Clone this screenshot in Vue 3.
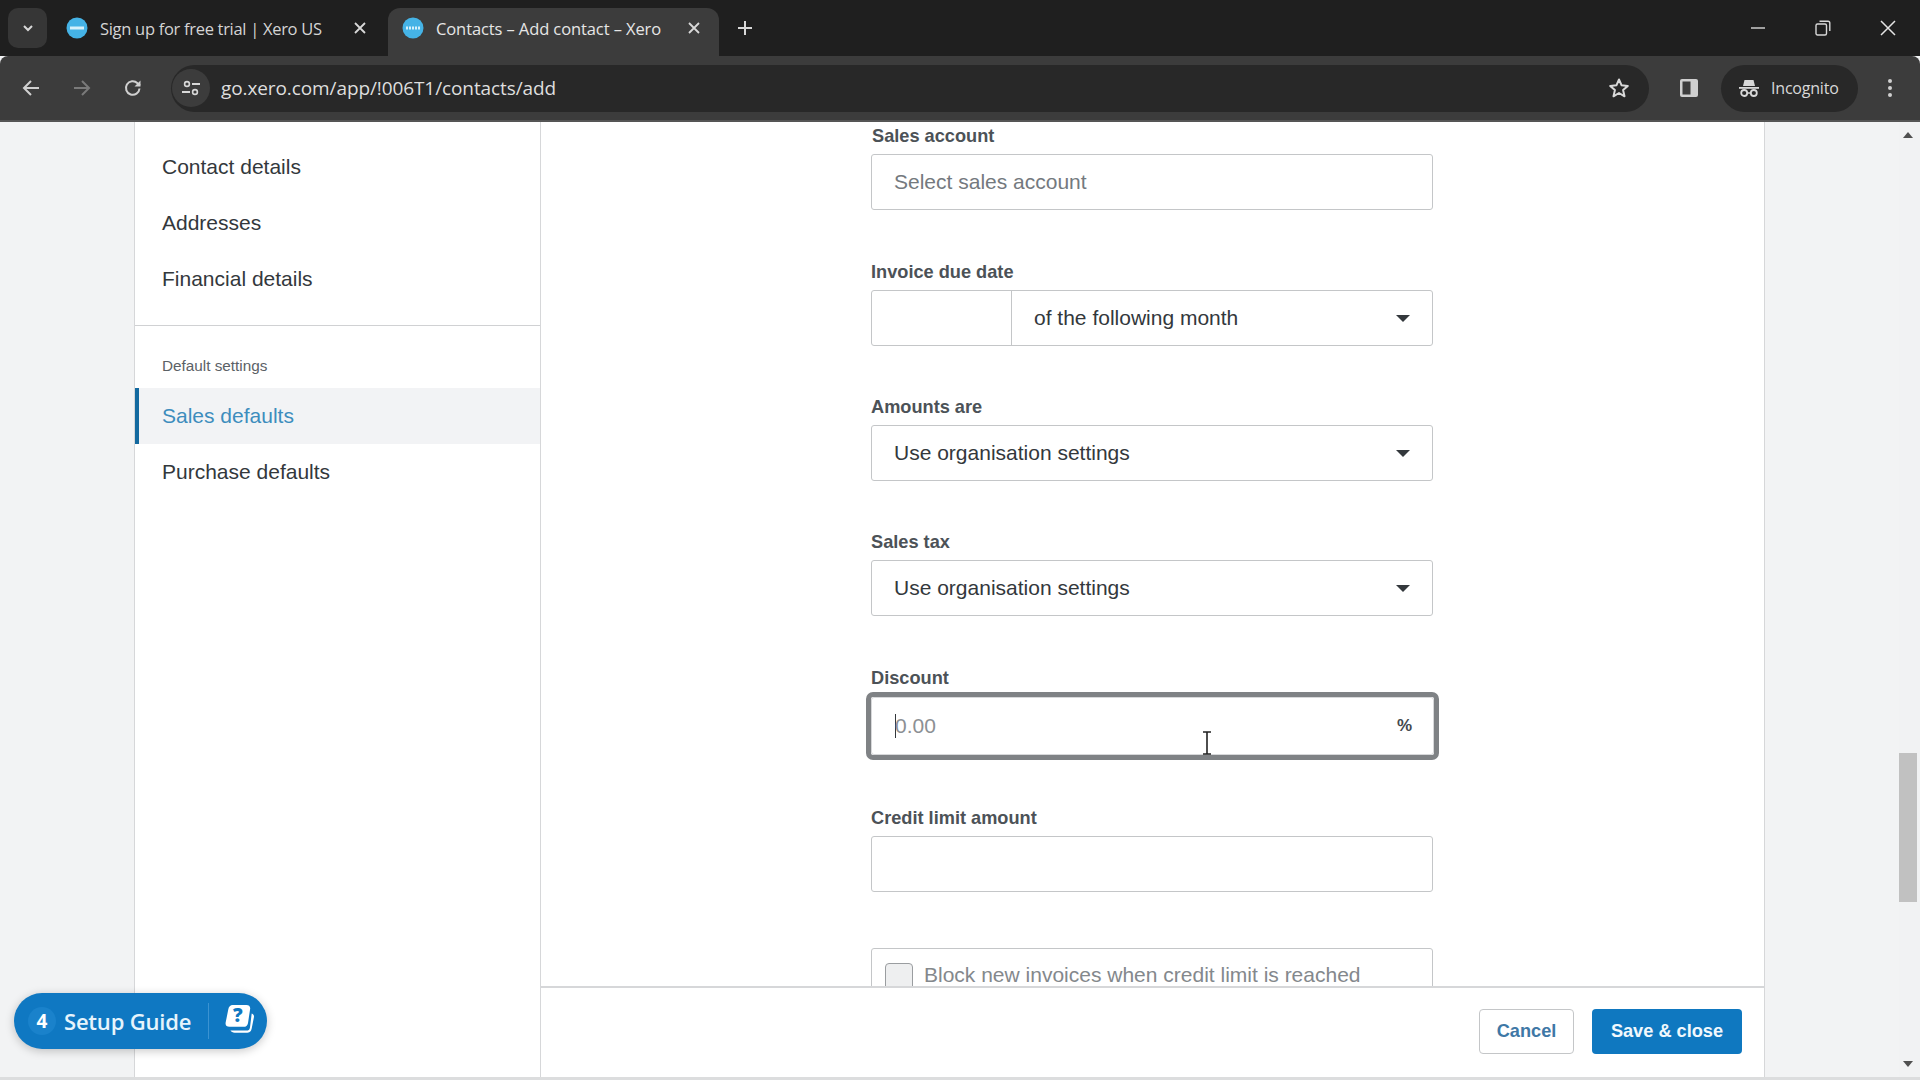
<template>
  <div class="screen">
    <header class="tabstrip">
      <div class="tab-menu">
        <svg width="14" height="14" viewBox="0 0 14 14"><path d="M3 5l4 4 4-4" fill="none" stroke="#d8d8d8" stroke-width="2" /></svg>
      </div>
      <div v-for="tab in tabs" :key="tab.title" :class="['tab', { active: tab.active }]">
        <svg class="favicon" width="22" height="22" viewBox="0 0 22 22">
          <circle cx="11" cy="11" r="10.5" fill="#45b3e6" />
          <path d="M4 11h14" stroke="#d6f1fb" stroke-width="3" :stroke-dasharray="tab.active ? '2 1' : '0'" />
        </svg>
        <span class="tab-title">{{ tab.title }}</span>
        <svg class="tab-close" width="14" height="14" viewBox="0 0 14 14"><path d="M2 2l10 10M12 2L2 12" stroke="#d8d8d8" stroke-width="1.8" /></svg>
      </div>
      <svg class="new-tab" width="16" height="16" viewBox="0 0 16 16"><path d="M8 1v14M1 8h14" stroke="#d8d8d8" stroke-width="2" /></svg>
      <div class="window-btns">
        <svg width="16" height="16" viewBox="0 0 16 16"><path d="M1 8h14" stroke="#d8d8d8" stroke-width="1.4" /></svg>
        <svg width="16" height="16" viewBox="0 0 16 16"><rect x="1" y="4" width="10.5" height="11" rx="1.5" fill="none" stroke="#d8d8d8" stroke-width="1.4" /><path d="M4.5 1.2h8.5a1.8 1.8 0 0 1 1.8 1.8v8" fill="none" stroke="#d8d8d8" stroke-width="1.4" /></svg>
        <svg width="16" height="16" viewBox="0 0 16 16"><path d="M1 1l14 14M15 1L1 15" stroke="#e4e4e4" stroke-width="1.5" /></svg>
      </div>
    </header>

    <div class="toolbar">
      <div class="nav-btns">
        <svg width="20" height="20" viewBox="0 0 20 20"><path d="M18 10H3M10 3l-7 7 7 7" fill="none" stroke="#d0d0d0" stroke-width="2" /></svg>
        <svg width="20" height="20" viewBox="0 0 20 20"><path d="M2 10h15M10 3l7 7-7 7" fill="none" stroke="#7a7a7a" stroke-width="2" /></svg>
        <svg width="20" height="20" viewBox="0 0 20 20"><path d="M16.500 10.500a6.800 6.800 0 1 1-2-5.300L17 7.500" fill="none" stroke="#d0d0d0" stroke-width="2" /><path d="M17.500 2.500v6h-6z" fill="#d0d0d0" /></svg>
      </div>
      <div class="address-bar">
        <div class="site-info">
          <svg width="20" height="20" viewBox="0 0 20 20">
            <circle cx="6" cy="6" r="2.400" fill="none" stroke="#d8d8d8" stroke-width="1.600" />
            <path d="M11 6h8M1 14h8" stroke="#d8d8d8" stroke-width="1.800" />
            <circle cx="14" cy="14" r="2.400" fill="none" stroke="#d8d8d8" stroke-width="1.600" />
          </svg>
        </div>
        <span class="url">go.xero.com/app/!006T1/contacts/add</span>
        <svg class="star" width="22" height="22" viewBox="0 0 22 22"><path d="M11 2.500l2.600 5.800 6.200.6-4.700 4.200 1.400 6.200L11 16l-5.500 3.300 1.400-6.200-4.700-4.200 6.200-.6z" fill="none" stroke="#d8d8d8" stroke-width="2" stroke-linejoin="round" /></svg>
      </div>
      <svg class="side-panel" width="20" height="20" viewBox="0 0 20 20"><rect x="1" y="1" width="18" height="18" rx="2" fill="#cfcfcf" /><rect x="3.500" y="3.500" width="8" height="13" fill="#3c3c3c" /></svg>
      <div class="incognito">
        <svg width="20" height="20" viewBox="0 0 20 20">
          <path d="M4 8l1.500-6h9L16 8z" fill="#d8d8d8" />
          <path d="M0 9h20v1.800H0z" fill="#d8d8d8" />
          <circle cx="5.200" cy="15" r="3" fill="none" stroke="#d8d8d8" stroke-width="1.800" />
          <circle cx="14.800" cy="15" r="3" fill="none" stroke="#d8d8d8" stroke-width="1.800" />
          <path d="M8 15h4" stroke="#d8d8d8" stroke-width="1.500" />
        </svg>
        <span>Incognito</span>
      </div>
      <svg class="kebab" width="6" height="20" viewBox="0 0 6 20"><circle cx="3" cy="3" r="2" fill="#d0d0d0" /><circle cx="3" cy="10" r="2" fill="#d0d0d0" /><circle cx="3" cy="17" r="2" fill="#d0d0d0" /></svg>
    </div>

    <div class="page">
      <div class="gutter-left"></div>
      <div class="card">
        <aside class="sidebar">
          <nav class="nav-top">
            <a v-for="item in topNav" :key="item" class="nav-item">{{ item }}</a>
          </nav>
          <div class="nav-heading">Default settings</div>
          <a class="nav-item selected">Sales defaults</a>
          <a class="nav-item">Purchase defaults</a>
        </aside>

        <main class="main">
          <div class="form">
            <label class="field-label first">Sales account</label>
            <div class="input placeholder">Select sales account</div>

            <label class="field-label invoice-label">Invoice due date</label>
            <div class="input split">
              <div class="split-day"></div>
              <div class="split-select">
                <span>of the following month</span>
                <i class="caret"></i>
              </div>
            </div>

            <template v-for="sel in selects" :key="sel">
              <label class="field-label">{{ sel }}</label>
              <div class="input select">
                <span>Use organisation settings</span>
                <i class="caret"></i>
              </div>
            </template>

            <label class="field-label discount-label">Discount</label>
            <div class="focus-ring">
              <div class="input discount">
                <span class="text-caret"></span>
                <span class="discount-value">0.00</span>
                <svg class="i-beam" width="12" height="24" viewBox="0 0 12 24"><path d="M2 1h8M6 1v22M2 23h8" fill="none" stroke="#222" stroke-width="1.600" /></svg>
                <span class="percent">%</span>
              </div>
            </div>

            <label class="field-label credit-label">Credit limit amount</label>
            <div class="input"></div>

            <div class="input block-invoices">
              <span class="checkbox"></span>
              <span>Block new invoices when credit limit is reached</span>
            </div>
          </div>

          <footer class="actions">
            <button class="btn cancel">Cancel</button>
            <button class="btn save">Save &amp; close</button>
          </footer>
        </main>
      </div>

      <div class="gutter-right"></div>
      <div class="scrollbar">
        <i class="arrow up"></i>
        <div class="thumb"></div>
        <i class="arrow down"></i>
      </div>

      <div class="setup-guide">
        <span class="guide-count">4</span>
        <span class="guide-label">Setup Guide</span>
        <span class="guide-sep"></span>
        <svg class="guide-icon" width="32" height="34" viewBox="0 0 30 32">
          <path d="M26 9c2 1 2.500 2 2 4l-2 10c-.6 3-2 4-5 4H10c-2 0-3-.6-4-2h15c2 0 3-1 3.400-3z" fill="#fff" />
          <path d="M8 1h13c2.500 0 4 1.500 3.500 4l-2 13c-.4 2-2 3.500-4 3.500H5c-2.500 0-4-1.500-3.500-4L4 5c.4-2.500 2-4 4-4z" fill="#fff" />
          <text x="13" y="17" text-anchor="middle" class="guide-q">?</text>
        </svg>
      </div>
    </div>
  </div>
</template>

<script setup>
const tabs = [
  { title: 'Sign up for free trial | Xero US', active: false },
  { title: 'Contacts – Add contact – Xero', active: true }
]

const topNav = ['Contact details', 'Addresses', 'Financial details']
const selects = ['Amounts are', 'Sales tax']
</script>

<style>
html,
body {
  margin: 0;
  overflow: hidden;
}
</style>

<style scoped>
.screen {
  width: 1920px;
  height: 1080px;
  display: flex;
  flex-direction: column;
  overflow: hidden;
  font-family: "Liberation Sans", Arial, sans-serif;
  background: #f2f3f4;
}

/* browser chrome */
.tabstrip {
  height: 56px;
  flex: none;
  display: flex;
  align-items: flex-end;
  padding-left: 8px;
  background: #1f1f1f;
  box-sizing: border-box;
}

.tab-menu {
  width: 39px;
  height: 40px;
  margin-bottom: 8px;
  margin-right: 9px;
  border-radius: 10px;
  background: #363636;
  display: flex;
  align-items: center;
  justify-content: center;
}

.tab {
  width: 332px;
  height: 48px;
  box-sizing: border-box;
  display: flex;
  align-items: center;
  padding: 0 0 8px 10px;
  color: #d4d4d4;
  font-family: "Open Sans", sans-serif;
  font-size: 16.500px;
  letter-spacing: -0.3px;
  white-space: nowrap;
}

.tab-close {
  flex: none;
  margin-right: 21px;
}

.tab.active {
  background: #3c3c3c;
  border-radius: 12px 12px 0 0;
  color: #e6e6e6;
  width: 331px;
  padding-left: 14px;
  letter-spacing: -0.1px;
}

.tab.active .tab-close {
  margin-right: 18px;
}

.favicon {
  flex: none;
  margin-right: 12px;
}

.tab-title {
  flex: 1;
}

.new-tab {
  margin: 0 0 20px 18px;
}

.window-btns {
  margin-left: auto;
  margin-bottom: 20px;
  margin-right: 24px;
  display: flex;
  gap: 49px;
}

.toolbar {
  height: 66px;
  flex: none;
  display: flex;
  align-items: center;
  background: #3c3c3c;
  border-radius: 8px 8px 0 0;
  box-sizing: border-box;
  border-bottom: 2px solid #555;
}

.nav-btns {
  display: flex;
  gap: 31px;
  padding-left: 21px;
  width: 150px;
  flex: none;
  box-sizing: border-box;
}

.address-bar {
  width: 1478px;
  height: 47px;
  margin-left: 21px;
  flex: none;
  display: flex;
  align-items: center;
  border-radius: 24px;
  background: #282828;
  box-sizing: border-box;
}

.site-info {
  width: 38px;
  height: 38px;
  margin-left: 1px;
  border-radius: 50%;
  background: #3c3c3c;
  display: flex;
  align-items: center;
  justify-content: center;
  flex: none;
}

.url {
  margin-left: 11px;
  color: #dedede;
  font-family: "Open Sans", sans-serif;
  font-size: 19px;
  letter-spacing: -0.1px;
}

.star {
  margin-left: auto;
  margin-right: 19px;
}

.side-panel {
  margin-left: 30px;
  flex: none;
}

.incognito {
  width: 137px;
  height: 47px;
  margin-left: 22px;
  flex: none;
  display: flex;
  align-items: center;
  gap: 12px;
  padding-left: 18px;
  box-sizing: border-box;
  border-radius: 24px;
  background: #282828;
  color: #d8d8d8;
  font-family: "Open Sans", sans-serif;
  font-size: 16px;
  letter-spacing: -0.2px;
}

.kebab {
  margin-left: 29px;
  flex: none;
}

/* page */
.page {
  flex: 1;
  min-height: 0;
  display: flex;
  position: relative;
  background: #f2f3f4;
  border-bottom: 3px solid #dcddde;
}

.gutter-left {
  width: 134px;
  flex: none;
}

.card {
  width: 1631px;
  flex: none;
  display: flex;
  background: #fff;
  border-left: 1px solid #d6d7d9;
  border-right: 1px solid #d6d7d9;
  box-sizing: border-box;
}

.sidebar {
  width: 406px;
  flex: none;
  border-right: 1px solid #d6d7d9;
  box-sizing: border-box;
}

.nav-top {
  padding: 17px 0 18px;
  border-bottom: 1px solid #d0d1d3;
}

.nav-item {
  display: block;
  height: 56px;
  line-height: 56px;
  padding-left: 27px;
  font-size: 21px;
  color: #33383c;
}

.nav-heading {
  padding: 31px 0 13px 27px;
  line-height: 18px;
  font-size: 15.300px;
  color: #5b6166;
}

.nav-item.selected {
  background: #f2f3f5;
  color: #3d8dbd;
  border-left: 4px solid #13699f;
  padding-left: 23px;
}

.main {
  flex: 1;
  min-width: 0;
  display: flex;
  flex-direction: column;
}

.form {
  flex: 1;
  min-height: 0;
  overflow: hidden;
  padding-left: 330px;
}

.field-label {
  display: block;
  width: 562px;
  line-height: 20px;
  margin: 51px 0 8px;
  font-size: 18.200px;
  font-weight: 700;
  color: #4c5257;
}

.field-label.first {
  margin-top: 4px;
  margin-left: 1px;
}

.field-label.invoice-label {
  margin-top: 52px;
}

.input {
  width: 562px;
  height: 56px;
  box-sizing: border-box;
  border: 1px solid #c4c6c8;
  border-radius: 3px;
  background: #fff;
  font-size: 21px;
  color: #33383c;
  display: flex;
  align-items: center;
  padding: 0 22px;
}

.placeholder {
  color: #74797e;
}

.split {
  padding: 0;
}

.split-day {
  width: 139px;
  height: 100%;
  border-right: 1px solid #c4c6c8;
  flex: none;
}

.split-select,
.select {
  flex: 1;
  display: flex;
  align-items: center;
  justify-content: space-between;
}

.split-select {
  padding: 0 22px;
}

.caret {
  width: 0;
  height: 0;
  border-left: 7px solid transparent;
  border-right: 7px solid transparent;
  border-top: 7px solid #33383c;
}

.discount-label {
  margin: 52px 0 4px;
}

.focus-ring {
  width: 573px;
  height: 68px;
  margin-left: -5px;
  box-sizing: border-box;
  border: 5px solid #7f8285;
  border-radius: 7px;
}

.discount {
  position: relative;
  width: 100%;
  height: 100%;
  border-color: #d7d8da;
  color: #8c9094;
  padding-left: 23px;
}

.text-caret {
  width: 1px;
  height: 24px;
  margin-right: -1px;
  background: #33383c;
}

.percent {
  margin-left: auto;
  font-size: 17px;
  font-weight: 700;
  color: #44494d;
  margin-right: -1px;
}

.i-beam {
  position: absolute;
  left: 329px;
  top: 33px;
}

.credit-label {
  margin-top: 48px;
}

.block-invoices {
  margin-top: 56px;
  padding-left: 13px;
  gap: 11px;
  align-items: flex-start;
  padding-top: 14px;
  color: #84888c;
  height: 80px;
}

.checkbox {
  width: 28px;
  height: 28px;
  box-sizing: border-box;
  border: 1px solid #9a9da0;
  border-radius: 4px;
  background: #eeeff0;
  flex: none;
}

.actions {
  height: 91px;
  flex: none;
  display: flex;
  justify-content: flex-end;
  gap: 18px;
  padding: 21px 22px 0 0;
  box-sizing: border-box;
  border-top: 2px solid #d6d7d9;
  background: #fff;
}

.btn {
  height: 45px;
  border-radius: 4px;
  font-family: "Liberation Sans", Arial, sans-serif;
  font-size: 18.200px;
  font-weight: 700;
  padding: 0;
  cursor: pointer;
}

.cancel {
  width: 95px;
  border: 1px solid #c4c6c8;
  background: #fff;
  color: #3f78a6;
}

.save {
  width: 150px;
  border: 0;
  background: #0f78c0;
  color: #f1f8fd;
}

.gutter-right {
  flex: 1;
}

.scrollbar {
  width: 21px;
  flex: none;
  display: flex;
  flex-direction: column;
  align-items: flex-start;
  background: #f1f2f3;
}

.arrow {
  width: 0;
  height: 0;
  margin-left: 4px;
  border-left: 5px solid transparent;
  border-right: 5px solid transparent;
}

.arrow.up {
  margin-top: 10px;
  border-bottom: 6px solid #505050;
}

.arrow.down {
  margin-top: auto;
  margin-bottom: 10px;
  border-top: 6px solid #505050;
}

.thumb {
  width: 18px;
  height: 149px;
  margin-top: 615px;
  background: #c1c1c1;
}

.setup-guide {
  position: absolute;
  left: 14px;
  top: 871px;
  width: 253px;
  height: 56px;
  box-sizing: border-box;
  border-radius: 28px;
  background: #0f78c2;
  box-shadow: 0 2px 10px rgba(0, 0, 0, 0.22);
  display: flex;
  align-items: center;
  padding-left: 14px;
  color: #e6f4fc;
  font-family: "Open Sans", sans-serif;
}

.guide-count {
  width: 28px;
  height: 28px;
  border-radius: 50%;
  background: #1a82cb;
  display: flex;
  align-items: center;
  justify-content: center;
  font-size: 19px;
  font-weight: 700;
  color: #fff;
}

.guide-label {
  margin-left: 8px;
  font-size: 22px;
  font-weight: 600;
  letter-spacing: -0.2px;
  white-space: nowrap;
}

.guide-sep {
  width: 1px;
  height: 36px;
  margin: 0 15px 0 auto;
  background: #3a93d2;
}

.guide-icon {
  margin-right: 11px;
  overflow: visible;
}

.guide-q {
  font-family: "Open Sans", sans-serif;
  font-size: 18px;
  font-weight: 800;
  fill: #0f78c2;
}
</style>
